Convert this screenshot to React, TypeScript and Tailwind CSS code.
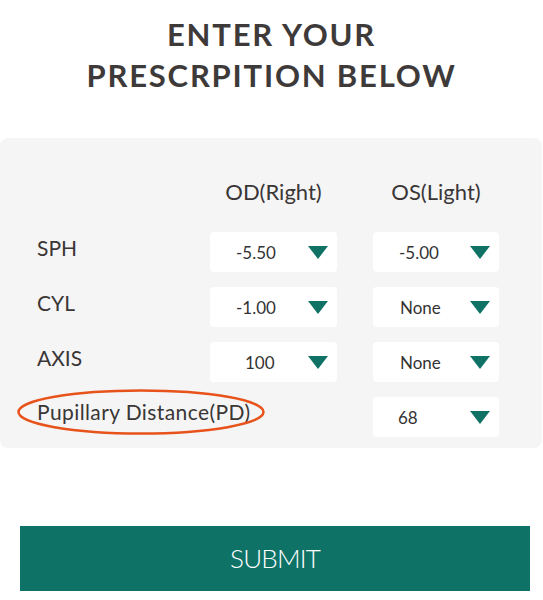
import React from "react";

const rows: { label: string; od?: { v: string; pl: string }; os: { v: string; pl: string } }[] = [
  { label: "SPH", od: { v: "-5.50", pl: "pl-[26px]" }, os: { v: "-5.00", pl: "pl-[26px]" } },
  { label: "CYL", od: { v: "-1.00", pl: "pl-[26px]" }, os: { v: "None", pl: "pl-[27px]" } },
  { label: "AXIS", od: { v: "100", pl: "pl-[35px]" }, os: { v: "None", pl: "pl-[27px]" } },
];

function Caret() {
  return (
    <svg width="20" height="13" viewBox="0 0 20 13" className="shrink-0">
      <path d="M0 0H20L10 13Z" fill="#0f7265" />
    </svg>
  );
}

function SelectBox({ value, pl }: { value: string; pl: string }) {
  return (
    <div className={`flex h-[40px] items-center justify-between rounded-[4px] bg-white pr-[9px] ${pl}`}>
      <span className="text-[17px] leading-none text-[#333]">{value}</span>
      <Caret />
    </div>
  );
}

export default function App() {
  return (
    <div className="h-[600px] w-[543px] overflow-hidden bg-white font-['Lato',sans-serif] text-[#3a3636]">
      <h1 className="pt-[14px] text-center text-[31px] font-bold leading-[41px] tracking-[1.8px] text-[#3e3a39]">
        ENTER YOUR
        <br />
        PRESCRPITION BELOW
      </h1>

      <div className="mt-[42px] h-[310px] w-[542px] rounded-[8px] bg-[#f5f5f5] pt-[40px] pl-[37px]">
        <div className="grid grid-cols-[137px_127px_126px] gap-x-[36px] gap-y-[15px]">
          <div />
          <div className="pb-[11px] text-center text-[22px] leading-[28px]">OD(Right)</div>
          <div className="pb-[11px] text-center text-[22px] leading-[28px]">OS(Light)</div>

          {rows.map((r) => (
            <React.Fragment key={r.label}>
              <div className="self-start text-[21px] leading-[32px]">{r.label}</div>
              {r.od && <SelectBox value={r.od.v} pl={r.od.pl} />}
              <SelectBox value={r.os.v} pl={r.os.pl} />
            </React.Fragment>
          ))}

          <div className="relative col-span-2 self-start whitespace-nowrap text-[21px] leading-[30px] tracking-[0.4px]">
            Pupillary Distance(PD)
            <svg
              className="pointer-events-none absolute left-[-21px] top-[-8px]"
              width="250"
              height="48"
              viewBox="0 0 250 48"
            >
              <ellipse cx="125" cy="23" rx="122.5" ry="21.5" fill="none" stroke="#e8531b" strokeWidth="2.5" />
            </svg>
          </div>
          <SelectBox value="68" pl="pl-[25px]" />
        </div>
      </div>

      <button className="mx-[20px] mt-[78px] flex h-[65px] w-[510px] items-center justify-center bg-[#0f7266] text-[26px] font-light tracking-[-0.8px] text-white">
        SUBMIT
      </button>
    </div>
  );
}
